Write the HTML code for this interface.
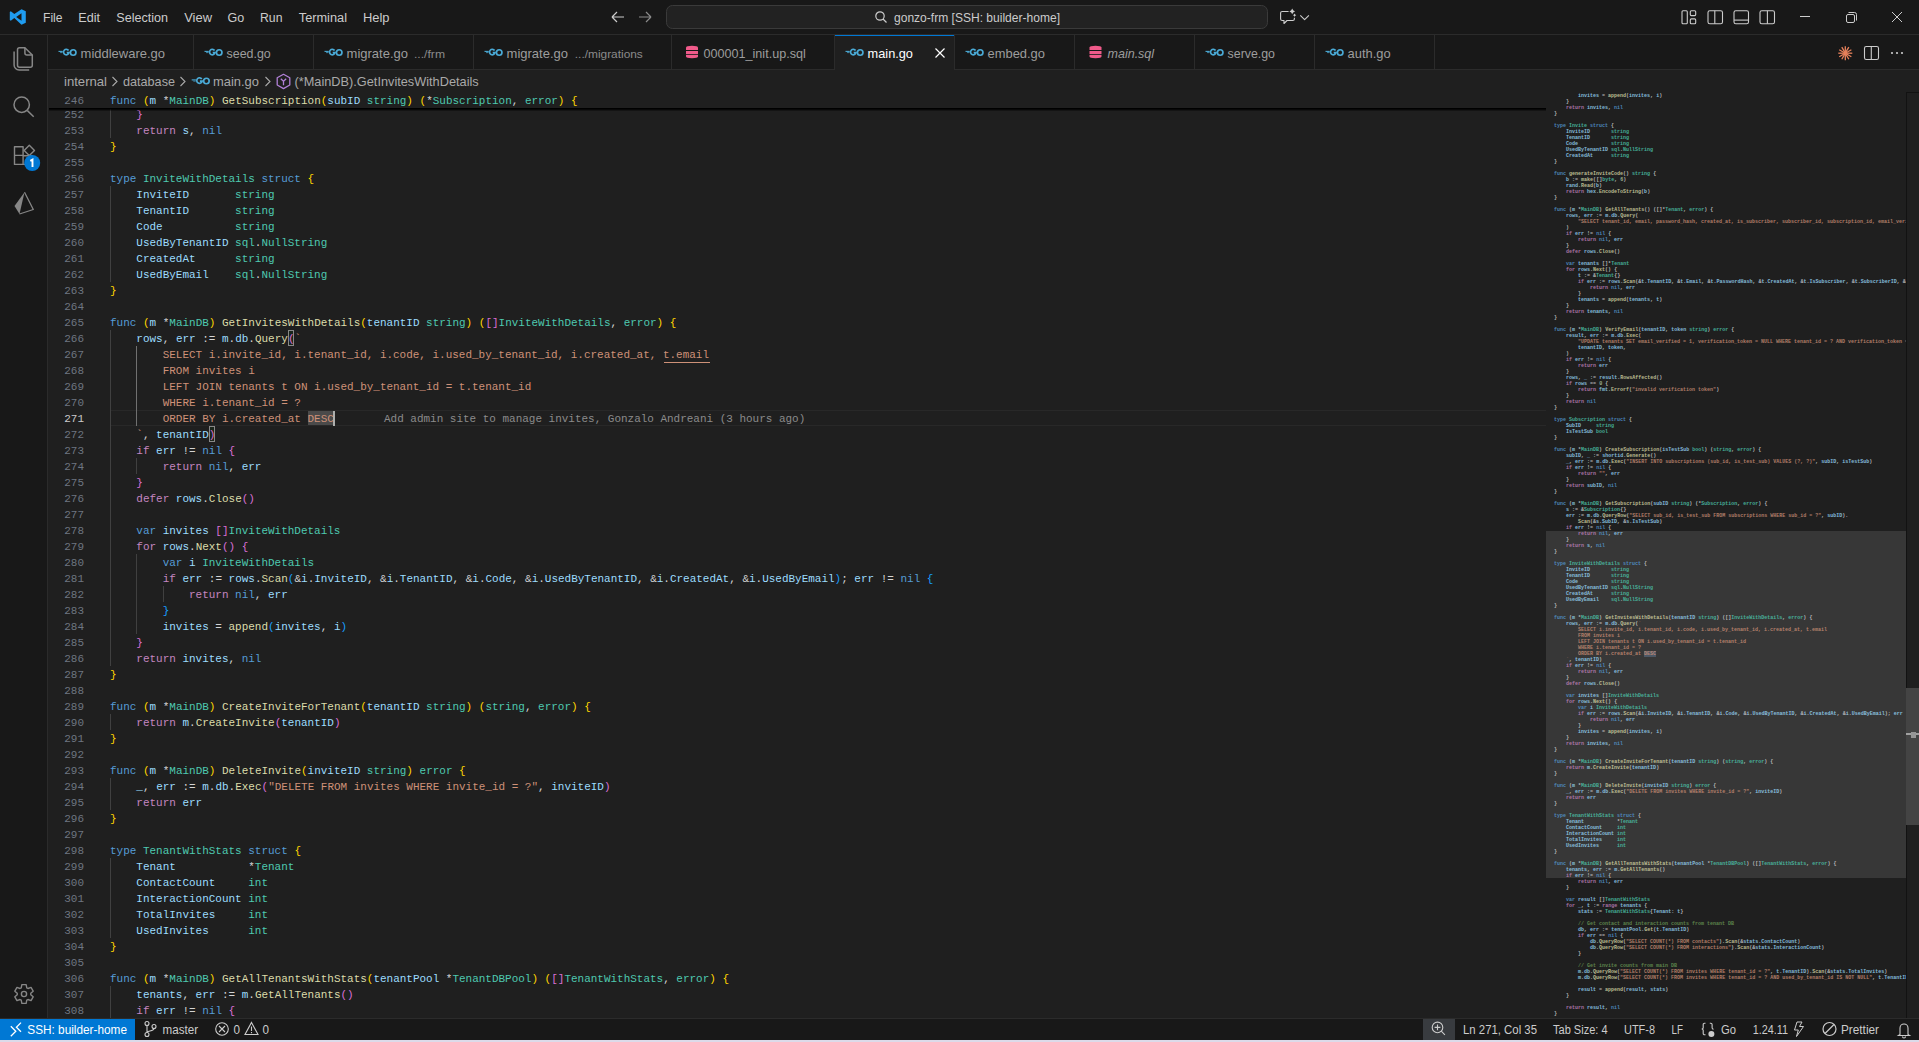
<!DOCTYPE html><html><head><meta charset="utf-8"><style>
*{margin:0;padding:0;box-sizing:border-box}
html,body{width:1919px;height:1042px;overflow:hidden;background:#1f1f1f}
body{position:relative;font-family:"Liberation Sans",sans-serif}
.abs{position:absolute}
.code{position:absolute;left:0;white-space:pre;font-family:"Liberation Mono",monospace;font-size:10.98px;line-height:16px;height:16px;color:#d4d4d4}
.ln{position:absolute;white-space:pre;font-family:"Liberation Mono",monospace;font-size:10.98px;line-height:16px;height:16px;color:#6e7681;text-align:right;width:40px;left:44px}
.mm{position:absolute;left:1554px;opacity:.82;white-space:pre;font-family:"Liberation Mono",monospace;font-size:5px;line-height:6px;height:6px;font-weight:bold}
svg text{font-family:"Liberation Sans",sans-serif}
</style></head><body><div class="abs" style="left:0;top:0;width:1919px;height:34px;background:#181818"></div><div class="abs" style="left:0;top:34px;width:1919px;height:1px;background:#2b2b2b"></div><div class="abs" style="left:0;top:35px;width:47px;height:983px;background:#181818"></div><div class="abs" style="left:47px;top:35px;width:1px;height:983px;background:#2b2b2b"></div><div class="abs" style="left:48px;top:35px;width:1871px;height:34px;background:#181818"></div><div class="abs" style="left:48px;top:69px;width:1871px;height:1px;background:#2b2b2b"></div><div class="abs" style="left:0;top:1018px;width:1919px;height:1px;background:#2b2b2b"></div><div class="abs" style="left:0;top:1019px;width:1919px;height:21px;background:#181818"></div><div class="abs" style="left:0;top:1019px;width:135px;height:21px;background:#0078d4"></div><div class="abs" style="left:1423px;top:1019px;width:32px;height:21px;background:#383b3f"></div><div class="abs" style="left:0;top:1040px;width:1919px;height:2px;background:#dcdae9"></div><div class="abs" style="left:835px;top:35px;width:119px;height:35px;background:#1f1f1f"></div><div class="abs" style="left:835px;top:35px;width:119px;height:1px;background:#0078d4"></div><div class="abs" style="left:193px;top:35px;width:1px;height:34px;background:#2b2b2b"></div><div class="abs" style="left:313px;top:35px;width:1px;height:34px;background:#2b2b2b"></div><div class="abs" style="left:473px;top:35px;width:1px;height:34px;background:#2b2b2b"></div><div class="abs" style="left:671px;top:35px;width:1px;height:34px;background:#2b2b2b"></div><div class="abs" style="left:834px;top:35px;width:1px;height:34px;background:#2b2b2b"></div><div class="abs" style="left:954px;top:35px;width:1px;height:34px;background:#2b2b2b"></div><div class="abs" style="left:1074px;top:35px;width:1px;height:34px;background:#2b2b2b"></div><div class="abs" style="left:1194px;top:35px;width:1px;height:34px;background:#2b2b2b"></div><div class="abs" style="left:1314px;top:35px;width:1px;height:34px;background:#2b2b2b"></div><div class="abs" style="left:1434px;top:35px;width:1px;height:34px;background:#2b2b2b"></div><div class="abs" style="left:110px;top:410px;width:1436px;height:16px;border-top:1px solid #282828;border-bottom:1px solid #282828"></div><div class="abs" style="left:110px;top:106px;width:1px;height:16px;background:#404040"></div><div class="abs" style="left:110px;top:122px;width:1px;height:16px;background:#404040"></div><div class="abs" style="left:110px;top:186px;width:1px;height:16px;background:#404040"></div><div class="abs" style="left:110px;top:202px;width:1px;height:16px;background:#404040"></div><div class="abs" style="left:110px;top:218px;width:1px;height:16px;background:#404040"></div><div class="abs" style="left:110px;top:234px;width:1px;height:16px;background:#404040"></div><div class="abs" style="left:110px;top:250px;width:1px;height:16px;background:#404040"></div><div class="abs" style="left:110px;top:266px;width:1px;height:16px;background:#404040"></div><div class="abs" style="left:110px;top:330px;width:1px;height:16px;background:#404040"></div><div class="abs" style="left:110px;top:346px;width:1px;height:16px;background:#404040"></div><div class="abs" style="left:136px;top:346px;width:1px;height:16px;background:#707070"></div><div class="abs" style="left:110px;top:362px;width:1px;height:16px;background:#404040"></div><div class="abs" style="left:136px;top:362px;width:1px;height:16px;background:#707070"></div><div class="abs" style="left:110px;top:378px;width:1px;height:16px;background:#404040"></div><div class="abs" style="left:136px;top:378px;width:1px;height:16px;background:#707070"></div><div class="abs" style="left:110px;top:394px;width:1px;height:16px;background:#404040"></div><div class="abs" style="left:136px;top:394px;width:1px;height:16px;background:#707070"></div><div class="abs" style="left:110px;top:410px;width:1px;height:16px;background:#404040"></div><div class="abs" style="left:136px;top:410px;width:1px;height:16px;background:#707070"></div><div class="abs" style="left:110px;top:426px;width:1px;height:16px;background:#404040"></div><div class="abs" style="left:110px;top:442px;width:1px;height:16px;background:#404040"></div><div class="abs" style="left:110px;top:458px;width:1px;height:16px;background:#404040"></div><div class="abs" style="left:136px;top:458px;width:1px;height:16px;background:#404040"></div><div class="abs" style="left:110px;top:474px;width:1px;height:16px;background:#404040"></div><div class="abs" style="left:110px;top:490px;width:1px;height:16px;background:#404040"></div><div class="abs" style="left:110px;top:506px;width:1px;height:16px;background:#404040"></div><div class="abs" style="left:110px;top:522px;width:1px;height:16px;background:#404040"></div><div class="abs" style="left:110px;top:538px;width:1px;height:16px;background:#404040"></div><div class="abs" style="left:110px;top:554px;width:1px;height:16px;background:#404040"></div><div class="abs" style="left:136px;top:554px;width:1px;height:16px;background:#404040"></div><div class="abs" style="left:110px;top:570px;width:1px;height:16px;background:#404040"></div><div class="abs" style="left:136px;top:570px;width:1px;height:16px;background:#404040"></div><div class="abs" style="left:110px;top:586px;width:1px;height:16px;background:#404040"></div><div class="abs" style="left:136px;top:586px;width:1px;height:16px;background:#404040"></div><div class="abs" style="left:163px;top:586px;width:1px;height:16px;background:#404040"></div><div class="abs" style="left:110px;top:602px;width:1px;height:16px;background:#404040"></div><div class="abs" style="left:136px;top:602px;width:1px;height:16px;background:#404040"></div><div class="abs" style="left:110px;top:618px;width:1px;height:16px;background:#404040"></div><div class="abs" style="left:136px;top:618px;width:1px;height:16px;background:#404040"></div><div class="abs" style="left:110px;top:634px;width:1px;height:16px;background:#404040"></div><div class="abs" style="left:110px;top:650px;width:1px;height:16px;background:#404040"></div><div class="abs" style="left:110px;top:714px;width:1px;height:16px;background:#404040"></div><div class="abs" style="left:110px;top:778px;width:1px;height:16px;background:#404040"></div><div class="abs" style="left:110px;top:794px;width:1px;height:16px;background:#404040"></div><div class="abs" style="left:110px;top:858px;width:1px;height:16px;background:#404040"></div><div class="abs" style="left:110px;top:874px;width:1px;height:16px;background:#404040"></div><div class="abs" style="left:110px;top:890px;width:1px;height:16px;background:#404040"></div><div class="abs" style="left:110px;top:906px;width:1px;height:16px;background:#404040"></div><div class="abs" style="left:110px;top:922px;width:1px;height:16px;background:#404040"></div><div class="abs" style="left:110px;top:986px;width:1px;height:16px;background:#404040"></div><div class="abs" style="left:110px;top:1002px;width:1px;height:16px;background:#404040"></div><div class="abs" style="left:308px;top:411px;width:25px;height:14px;background:#4a4a4a"></div><div class="abs" style="left:287.9px;top:330px;width:6.6px;height:16px;border:1px solid #888;background:#0064001a"></div><div class="abs" style="left:208.8px;top:426px;width:6.6px;height:16px;border:1px solid #888;background:#0064001a"></div><div class="code" style="left:110.0px;top:107px">    <span style="color:#da70d6">}</span></div><div class="ln" style="top:107px;color:#6e7681">252</div><div class="code" style="left:110.0px;top:123px">    <span style="color:#c586c0">return</span> <span style="color:#9cdcfe">s</span><span style="color:#d4d4d4">,</span> <span style="color:#569cd6">nil</span></div><div class="ln" style="top:123px;color:#6e7681">253</div><div class="code" style="left:110.0px;top:139px"><span style="color:#ffd700">}</span></div><div class="ln" style="top:139px;color:#6e7681">254</div><div class="code" style="left:110.0px;top:155px"></div><div class="ln" style="top:155px;color:#6e7681">255</div><div class="code" style="left:110.0px;top:171px"><span style="color:#569cd6">type</span> <span style="color:#4ec9b0">InviteWithDetails</span> <span style="color:#569cd6">struct</span> <span style="color:#ffd700">{</span></div><div class="ln" style="top:171px;color:#6e7681">256</div><div class="code" style="left:110.0px;top:187px">    <span style="color:#9cdcfe">InviteID</span>       <span style="color:#4ec9b0">string</span></div><div class="ln" style="top:187px;color:#6e7681">257</div><div class="code" style="left:110.0px;top:203px">    <span style="color:#9cdcfe">TenantID</span>       <span style="color:#4ec9b0">string</span></div><div class="ln" style="top:203px;color:#6e7681">258</div><div class="code" style="left:110.0px;top:219px">    <span style="color:#9cdcfe">Code</span>           <span style="color:#4ec9b0">string</span></div><div class="ln" style="top:219px;color:#6e7681">259</div><div class="code" style="left:110.0px;top:235px">    <span style="color:#9cdcfe">UsedByTenantID</span> <span style="color:#4ec9b0">sql</span><span style="color:#d4d4d4">.</span><span style="color:#4ec9b0">NullString</span></div><div class="ln" style="top:235px;color:#6e7681">260</div><div class="code" style="left:110.0px;top:251px">    <span style="color:#9cdcfe">CreatedAt</span>      <span style="color:#4ec9b0">string</span></div><div class="ln" style="top:251px;color:#6e7681">261</div><div class="code" style="left:110.0px;top:267px">    <span style="color:#9cdcfe">UsedByEmail</span>    <span style="color:#4ec9b0">sql</span><span style="color:#d4d4d4">.</span><span style="color:#4ec9b0">NullString</span></div><div class="ln" style="top:267px;color:#6e7681">262</div><div class="code" style="left:110.0px;top:283px"><span style="color:#ffd700">}</span></div><div class="ln" style="top:283px;color:#6e7681">263</div><div class="code" style="left:110.0px;top:299px"></div><div class="ln" style="top:299px;color:#6e7681">264</div><div class="code" style="left:110.0px;top:315px"><span style="color:#569cd6">func</span> <span style="color:#ffd700">(</span><span style="color:#9cdcfe">m</span> <span style="color:#d4d4d4">*</span><span style="color:#4ec9b0">MainDB</span><span style="color:#ffd700">)</span> <span style="color:#dcdcaa">GetInvitesWithDetails</span><span style="color:#ffd700">(</span><span style="color:#9cdcfe">tenantID</span> <span style="color:#4ec9b0">string</span><span style="color:#ffd700">)</span> <span style="color:#ffd700">(</span><span style="color:#da70d6">[</span><span style="color:#da70d6">]</span><span style="color:#4ec9b0">InviteWithDetails</span><span style="color:#d4d4d4">,</span> <span style="color:#4ec9b0">error</span><span style="color:#ffd700">)</span> <span style="color:#ffd700">{</span></div><div class="ln" style="top:315px;color:#6e7681">265</div><div class="code" style="left:110.0px;top:331px">    <span style="color:#9cdcfe">rows</span><span style="color:#d4d4d4">,</span> <span style="color:#9cdcfe">err</span> <span style="color:#d4d4d4">:</span><span style="color:#d4d4d4">=</span> <span style="color:#9cdcfe">m</span><span style="color:#d4d4d4">.</span><span style="color:#9cdcfe">db</span><span style="color:#d4d4d4">.</span><span style="color:#dcdcaa">Query</span><span style="color:#da70d6">(</span><span style="color:#ce9178">`</span></div><div class="ln" style="top:331px;color:#6e7681">266</div><div class="code" style="left:110.0px;top:347px"><span style="color:#ce9178">        SELECT i.invite_id, i.tenant_id, i.code, i.used_by_tenant_id, i.created_at, t.email</span></div><div class="ln" style="top:347px;color:#6e7681">267</div><div class="code" style="left:110.0px;top:363px"><span style="color:#ce9178">        FROM invites i</span></div><div class="ln" style="top:363px;color:#6e7681">268</div><div class="code" style="left:110.0px;top:379px"><span style="color:#ce9178">        LEFT JOIN tenants t ON i.used_by_tenant_id = t.tenant_id</span></div><div class="ln" style="top:379px;color:#6e7681">269</div><div class="code" style="left:110.0px;top:395px"><span style="color:#ce9178">        WHERE i.tenant_id = ?</span></div><div class="ln" style="top:395px;color:#6e7681">270</div><div class="code" style="left:110.0px;top:411px"><span style="color:#ce9178">        ORDER BY i.created_at DESC</span></div><div class="ln" style="top:411px;color:#cccccc">271</div><div class="code" style="left:110.0px;top:427px"><span style="color:#ce9178">    `</span><span style="color:#d4d4d4">,</span> <span style="color:#9cdcfe">tenantID</span><span style="color:#da70d6">)</span></div><div class="ln" style="top:427px;color:#6e7681">272</div><div class="code" style="left:110.0px;top:443px">    <span style="color:#c586c0">if</span> <span style="color:#9cdcfe">err</span> <span style="color:#d4d4d4">!</span><span style="color:#d4d4d4">=</span> <span style="color:#569cd6">nil</span> <span style="color:#da70d6">{</span></div><div class="ln" style="top:443px;color:#6e7681">273</div><div class="code" style="left:110.0px;top:459px">        <span style="color:#c586c0">return</span> <span style="color:#569cd6">nil</span><span style="color:#d4d4d4">,</span> <span style="color:#9cdcfe">err</span></div><div class="ln" style="top:459px;color:#6e7681">274</div><div class="code" style="left:110.0px;top:475px">    <span style="color:#da70d6">}</span></div><div class="ln" style="top:475px;color:#6e7681">275</div><div class="code" style="left:110.0px;top:491px">    <span style="color:#c586c0">defer</span> <span style="color:#9cdcfe">rows</span><span style="color:#d4d4d4">.</span><span style="color:#dcdcaa">Close</span><span style="color:#da70d6">(</span><span style="color:#da70d6">)</span></div><div class="ln" style="top:491px;color:#6e7681">276</div><div class="code" style="left:110.0px;top:507px"></div><div class="ln" style="top:507px;color:#6e7681">277</div><div class="code" style="left:110.0px;top:523px">    <span style="color:#569cd6">var</span> <span style="color:#9cdcfe">invites</span> <span style="color:#da70d6">[</span><span style="color:#da70d6">]</span><span style="color:#4ec9b0">InviteWithDetails</span></div><div class="ln" style="top:523px;color:#6e7681">278</div><div class="code" style="left:110.0px;top:539px">    <span style="color:#c586c0">for</span> <span style="color:#9cdcfe">rows</span><span style="color:#d4d4d4">.</span><span style="color:#dcdcaa">Next</span><span style="color:#da70d6">(</span><span style="color:#da70d6">)</span> <span style="color:#da70d6">{</span></div><div class="ln" style="top:539px;color:#6e7681">279</div><div class="code" style="left:110.0px;top:555px">        <span style="color:#569cd6">var</span> <span style="color:#9cdcfe">i</span> <span style="color:#4ec9b0">InviteWithDetails</span></div><div class="ln" style="top:555px;color:#6e7681">280</div><div class="code" style="left:110.0px;top:571px">        <span style="color:#c586c0">if</span> <span style="color:#9cdcfe">err</span> <span style="color:#d4d4d4">:</span><span style="color:#d4d4d4">=</span> <span style="color:#9cdcfe">rows</span><span style="color:#d4d4d4">.</span><span style="color:#dcdcaa">Scan</span><span style="color:#179fff">(</span><span style="color:#d4d4d4">&amp;</span><span style="color:#9cdcfe">i</span><span style="color:#d4d4d4">.</span><span style="color:#9cdcfe">InviteID</span><span style="color:#d4d4d4">,</span> <span style="color:#d4d4d4">&amp;</span><span style="color:#9cdcfe">i</span><span style="color:#d4d4d4">.</span><span style="color:#9cdcfe">TenantID</span><span style="color:#d4d4d4">,</span> <span style="color:#d4d4d4">&amp;</span><span style="color:#9cdcfe">i</span><span style="color:#d4d4d4">.</span><span style="color:#9cdcfe">Code</span><span style="color:#d4d4d4">,</span> <span style="color:#d4d4d4">&amp;</span><span style="color:#9cdcfe">i</span><span style="color:#d4d4d4">.</span><span style="color:#9cdcfe">UsedByTenantID</span><span style="color:#d4d4d4">,</span> <span style="color:#d4d4d4">&amp;</span><span style="color:#9cdcfe">i</span><span style="color:#d4d4d4">.</span><span style="color:#9cdcfe">CreatedAt</span><span style="color:#d4d4d4">,</span> <span style="color:#d4d4d4">&amp;</span><span style="color:#9cdcfe">i</span><span style="color:#d4d4d4">.</span><span style="color:#9cdcfe">UsedByEmail</span><span style="color:#179fff">)</span><span style="color:#d4d4d4">;</span> <span style="color:#9cdcfe">err</span> <span style="color:#d4d4d4">!</span><span style="color:#d4d4d4">=</span> <span style="color:#569cd6">nil</span> <span style="color:#179fff">{</span></div><div class="ln" style="top:571px;color:#6e7681">281</div><div class="code" style="left:110.0px;top:587px">            <span style="color:#c586c0">return</span> <span style="color:#569cd6">nil</span><span style="color:#d4d4d4">,</span> <span style="color:#9cdcfe">err</span></div><div class="ln" style="top:587px;color:#6e7681">282</div><div class="code" style="left:110.0px;top:603px">        <span style="color:#179fff">}</span></div><div class="ln" style="top:603px;color:#6e7681">283</div><div class="code" style="left:110.0px;top:619px">        <span style="color:#9cdcfe">invites</span> <span style="color:#d4d4d4">=</span> <span style="color:#dcdcaa">append</span><span style="color:#179fff">(</span><span style="color:#9cdcfe">invites</span><span style="color:#d4d4d4">,</span> <span style="color:#9cdcfe">i</span><span style="color:#179fff">)</span></div><div class="ln" style="top:619px;color:#6e7681">284</div><div class="code" style="left:110.0px;top:635px">    <span style="color:#da70d6">}</span></div><div class="ln" style="top:635px;color:#6e7681">285</div><div class="code" style="left:110.0px;top:651px">    <span style="color:#c586c0">return</span> <span style="color:#9cdcfe">invites</span><span style="color:#d4d4d4">,</span> <span style="color:#569cd6">nil</span></div><div class="ln" style="top:651px;color:#6e7681">286</div><div class="code" style="left:110.0px;top:667px"><span style="color:#ffd700">}</span></div><div class="ln" style="top:667px;color:#6e7681">287</div><div class="code" style="left:110.0px;top:683px"></div><div class="ln" style="top:683px;color:#6e7681">288</div><div class="code" style="left:110.0px;top:699px"><span style="color:#569cd6">func</span> <span style="color:#ffd700">(</span><span style="color:#9cdcfe">m</span> <span style="color:#d4d4d4">*</span><span style="color:#4ec9b0">MainDB</span><span style="color:#ffd700">)</span> <span style="color:#dcdcaa">CreateInviteForTenant</span><span style="color:#ffd700">(</span><span style="color:#9cdcfe">tenantID</span> <span style="color:#4ec9b0">string</span><span style="color:#ffd700">)</span> <span style="color:#ffd700">(</span><span style="color:#4ec9b0">string</span><span style="color:#d4d4d4">,</span> <span style="color:#4ec9b0">error</span><span style="color:#ffd700">)</span> <span style="color:#ffd700">{</span></div><div class="ln" style="top:699px;color:#6e7681">289</div><div class="code" style="left:110.0px;top:715px">    <span style="color:#c586c0">return</span> <span style="color:#9cdcfe">m</span><span style="color:#d4d4d4">.</span><span style="color:#dcdcaa">CreateInvite</span><span style="color:#da70d6">(</span><span style="color:#9cdcfe">tenantID</span><span style="color:#da70d6">)</span></div><div class="ln" style="top:715px;color:#6e7681">290</div><div class="code" style="left:110.0px;top:731px"><span style="color:#ffd700">}</span></div><div class="ln" style="top:731px;color:#6e7681">291</div><div class="code" style="left:110.0px;top:747px"></div><div class="ln" style="top:747px;color:#6e7681">292</div><div class="code" style="left:110.0px;top:763px"><span style="color:#569cd6">func</span> <span style="color:#ffd700">(</span><span style="color:#9cdcfe">m</span> <span style="color:#d4d4d4">*</span><span style="color:#4ec9b0">MainDB</span><span style="color:#ffd700">)</span> <span style="color:#dcdcaa">DeleteInvite</span><span style="color:#ffd700">(</span><span style="color:#9cdcfe">inviteID</span> <span style="color:#4ec9b0">string</span><span style="color:#ffd700">)</span> <span style="color:#4ec9b0">error</span> <span style="color:#ffd700">{</span></div><div class="ln" style="top:763px;color:#6e7681">293</div><div class="code" style="left:110.0px;top:779px">    <span style="color:#9cdcfe">_</span><span style="color:#d4d4d4">,</span> <span style="color:#9cdcfe">err</span> <span style="color:#d4d4d4">:</span><span style="color:#d4d4d4">=</span> <span style="color:#9cdcfe">m</span><span style="color:#d4d4d4">.</span><span style="color:#9cdcfe">db</span><span style="color:#d4d4d4">.</span><span style="color:#dcdcaa">Exec</span><span style="color:#da70d6">(</span><span style="color:#ce9178">&quot;DELETE FROM invites WHERE invite_id = ?&quot;</span><span style="color:#d4d4d4">,</span> <span style="color:#9cdcfe">inviteID</span><span style="color:#da70d6">)</span></div><div class="ln" style="top:779px;color:#6e7681">294</div><div class="code" style="left:110.0px;top:795px">    <span style="color:#c586c0">return</span> <span style="color:#9cdcfe">err</span></div><div class="ln" style="top:795px;color:#6e7681">295</div><div class="code" style="left:110.0px;top:811px"><span style="color:#ffd700">}</span></div><div class="ln" style="top:811px;color:#6e7681">296</div><div class="code" style="left:110.0px;top:827px"></div><div class="ln" style="top:827px;color:#6e7681">297</div><div class="code" style="left:110.0px;top:843px"><span style="color:#569cd6">type</span> <span style="color:#4ec9b0">TenantWithStats</span> <span style="color:#569cd6">struct</span> <span style="color:#ffd700">{</span></div><div class="ln" style="top:843px;color:#6e7681">298</div><div class="code" style="left:110.0px;top:859px">    <span style="color:#9cdcfe">Tenant</span>           <span style="color:#d4d4d4">*</span><span style="color:#4ec9b0">Tenant</span></div><div class="ln" style="top:859px;color:#6e7681">299</div><div class="code" style="left:110.0px;top:875px">    <span style="color:#9cdcfe">ContactCount</span>     <span style="color:#4ec9b0">int</span></div><div class="ln" style="top:875px;color:#6e7681">300</div><div class="code" style="left:110.0px;top:891px">    <span style="color:#9cdcfe">InteractionCount</span> <span style="color:#4ec9b0">int</span></div><div class="ln" style="top:891px;color:#6e7681">301</div><div class="code" style="left:110.0px;top:907px">    <span style="color:#9cdcfe">TotalInvites</span>     <span style="color:#4ec9b0">int</span></div><div class="ln" style="top:907px;color:#6e7681">302</div><div class="code" style="left:110.0px;top:923px">    <span style="color:#9cdcfe">UsedInvites</span>      <span style="color:#4ec9b0">int</span></div><div class="ln" style="top:923px;color:#6e7681">303</div><div class="code" style="left:110.0px;top:939px"><span style="color:#ffd700">}</span></div><div class="ln" style="top:939px;color:#6e7681">304</div><div class="code" style="left:110.0px;top:955px"></div><div class="ln" style="top:955px;color:#6e7681">305</div><div class="code" style="left:110.0px;top:971px"><span style="color:#569cd6">func</span> <span style="color:#ffd700">(</span><span style="color:#9cdcfe">m</span> <span style="color:#d4d4d4">*</span><span style="color:#4ec9b0">MainDB</span><span style="color:#ffd700">)</span> <span style="color:#dcdcaa">GetAllTenantsWithStats</span><span style="color:#ffd700">(</span><span style="color:#9cdcfe">tenantPool</span> <span style="color:#d4d4d4">*</span><span style="color:#4ec9b0">TenantDBPool</span><span style="color:#ffd700">)</span> <span style="color:#ffd700">(</span><span style="color:#da70d6">[</span><span style="color:#da70d6">]</span><span style="color:#4ec9b0">TenantWithStats</span><span style="color:#d4d4d4">,</span> <span style="color:#4ec9b0">error</span><span style="color:#ffd700">)</span> <span style="color:#ffd700">{</span></div><div class="ln" style="top:971px;color:#6e7681">306</div><div class="code" style="left:110.0px;top:987px">    <span style="color:#9cdcfe">tenants</span><span style="color:#d4d4d4">,</span> <span style="color:#9cdcfe">err</span> <span style="color:#d4d4d4">:</span><span style="color:#d4d4d4">=</span> <span style="color:#9cdcfe">m</span><span style="color:#d4d4d4">.</span><span style="color:#dcdcaa">GetAllTenants</span><span style="color:#da70d6">(</span><span style="color:#da70d6">)</span></div><div class="ln" style="top:987px;color:#6e7681">307</div><div class="code" style="left:110.0px;top:1003px">    <span style="color:#c586c0">if</span> <span style="color:#9cdcfe">err</span> <span style="color:#d4d4d4">!</span><span style="color:#d4d4d4">=</span> <span style="color:#569cd6">nil</span> <span style="color:#da70d6">{</span></div><div class="ln" style="top:1003px;color:#6e7681">308</div><div class="abs" style="left:663.6px;top:362px;width:46.1px;height:1px;background:#ce9178"></div><div class="abs" style="left:333px;top:411px;width:2px;height:15px;background:#aeafad"></div><div class="code" style="left:384px;top:411px;color:#8b8b8b">Add admin site to manage invites, Gonzalo Andreani (3 hours ago)</div><div class="abs" style="left:48px;top:92px;width:1498px;height:16px;background:#1f1f1f"></div><div class="abs" style="left:49px;top:108px;width:1497px;height:1px;background:#000"></div><div class="abs" style="left:49px;top:109px;width:1497px;height:1px;background:rgba(0,0,0,.72)"></div><div class="abs" style="left:49px;top:110px;width:1497px;height:1px;background:rgba(0,0,0,.35)"></div><div class="code" style="left:110.0px;top:93px"><span style="color:#569cd6">func</span> <span style="color:#ffd700">(</span><span style="color:#9cdcfe">m</span> <span style="color:#d4d4d4">*</span><span style="color:#4ec9b0">MainDB</span><span style="color:#ffd700">)</span> <span style="color:#dcdcaa">GetSubscription</span><span style="color:#ffd700">(</span><span style="color:#9cdcfe">subID</span> <span style="color:#4ec9b0">string</span><span style="color:#ffd700">)</span> <span style="color:#ffd700">(</span><span style="color:#d4d4d4">*</span><span style="color:#4ec9b0">Subscription</span><span style="color:#d4d4d4">,</span> <span style="color:#4ec9b0">error</span><span style="color:#ffd700">)</span> <span style="color:#ffd700">{</span></div><div class="ln" style="top:93px">246</div><div class="abs" style="left:1546px;top:531px;width:360px;height:347px;background:#373737"></div><div class="abs" style="left:1644px;top:651px;width:12px;height:6px;background:#4d5866"></div><div class="abs" style="left:0;top:0;width:1906px;height:1018px;overflow:hidden"><div class="mm" style="top:93px">        <span style="color:#9cdcfe">invites</span> <span style="color:#d4d4d4">=</span> <span style="color:#dcdcaa">append</span><span style="color:#d4d4d4">(</span><span style="color:#9cdcfe">invites</span><span style="color:#d4d4d4">,</span> <span style="color:#9cdcfe">i</span><span style="color:#d4d4d4">)</span></div><div class="mm" style="top:99px">    <span style="color:#d4d4d4">}</span></div><div class="mm" style="top:105px">    <span style="color:#c586c0">return</span> <span style="color:#9cdcfe">invites</span><span style="color:#d4d4d4">,</span> <span style="color:#569cd6">nil</span></div><div class="mm" style="top:111px"><span style="color:#d4d4d4">}</span></div><div class="mm" style="top:117px"></div><div class="mm" style="top:123px"><span style="color:#569cd6">type</span> <span style="color:#4ec9b0">Invite</span> <span style="color:#569cd6">struct</span> <span style="color:#d4d4d4">{</span></div><div class="mm" style="top:129px">    <span style="color:#9cdcfe">InviteID</span>       <span style="color:#4ec9b0">string</span></div><div class="mm" style="top:135px">    <span style="color:#9cdcfe">TenantID</span>       <span style="color:#4ec9b0">string</span></div><div class="mm" style="top:141px">    <span style="color:#9cdcfe">Code</span>           <span style="color:#4ec9b0">string</span></div><div class="mm" style="top:147px">    <span style="color:#9cdcfe">UsedByTenantID</span> <span style="color:#4ec9b0">sql</span><span style="color:#d4d4d4">.</span><span style="color:#4ec9b0">NullString</span></div><div class="mm" style="top:153px">    <span style="color:#9cdcfe">CreatedAt</span>      <span style="color:#4ec9b0">string</span></div><div class="mm" style="top:159px"><span style="color:#d4d4d4">}</span></div><div class="mm" style="top:165px"></div><div class="mm" style="top:171px"><span style="color:#569cd6">func</span> <span style="color:#dcdcaa">generateInviteCode</span><span style="color:#d4d4d4">(</span><span style="color:#d4d4d4">)</span> <span style="color:#4ec9b0">string</span> <span style="color:#d4d4d4">{</span></div><div class="mm" style="top:177px">    <span style="color:#9cdcfe">b</span> <span style="color:#d4d4d4">:</span><span style="color:#d4d4d4">=</span> <span style="color:#dcdcaa">make</span><span style="color:#d4d4d4">(</span><span style="color:#d4d4d4">[</span><span style="color:#d4d4d4">]</span><span style="color:#4ec9b0">byte</span><span style="color:#d4d4d4">,</span> <span style="color:#b5cea8">6</span><span style="color:#d4d4d4">)</span></div><div class="mm" style="top:183px">    <span style="color:#9cdcfe">rand</span><span style="color:#d4d4d4">.</span><span style="color:#dcdcaa">Read</span><span style="color:#d4d4d4">(</span><span style="color:#9cdcfe">b</span><span style="color:#d4d4d4">)</span></div><div class="mm" style="top:189px">    <span style="color:#c586c0">return</span> <span style="color:#9cdcfe">hex</span><span style="color:#d4d4d4">.</span><span style="color:#dcdcaa">EncodeToString</span><span style="color:#d4d4d4">(</span><span style="color:#9cdcfe">b</span><span style="color:#d4d4d4">)</span></div><div class="mm" style="top:195px"><span style="color:#d4d4d4">}</span></div><div class="mm" style="top:201px"></div><div class="mm" style="top:207px"><span style="color:#569cd6">func</span> <span style="color:#d4d4d4">(</span><span style="color:#9cdcfe">m</span> <span style="color:#d4d4d4">*</span><span style="color:#4ec9b0">MainDB</span><span style="color:#d4d4d4">)</span> <span style="color:#dcdcaa">GetAllTenants</span><span style="color:#d4d4d4">(</span><span style="color:#d4d4d4">)</span> <span style="color:#d4d4d4">(</span><span style="color:#d4d4d4">[</span><span style="color:#d4d4d4">]</span><span style="color:#d4d4d4">*</span><span style="color:#4ec9b0">Tenant</span><span style="color:#d4d4d4">,</span> <span style="color:#4ec9b0">error</span><span style="color:#d4d4d4">)</span> <span style="color:#d4d4d4">{</span></div><div class="mm" style="top:213px">    <span style="color:#9cdcfe">rows</span><span style="color:#d4d4d4">,</span> <span style="color:#9cdcfe">err</span> <span style="color:#d4d4d4">:</span><span style="color:#d4d4d4">=</span> <span style="color:#9cdcfe">m</span><span style="color:#d4d4d4">.</span><span style="color:#9cdcfe">db</span><span style="color:#d4d4d4">.</span><span style="color:#dcdcaa">Query</span><span style="color:#d4d4d4">(</span></div><div class="mm" style="top:219px">        <span style="color:#ce9178">&quot;SELECT tenant_id, email, password_hash, created_at, is_subscriber, subscriber_id, subscription_id, email_verified FROM tenants&quot;</span><span style="color:#d4d4d4">,</span></div><div class="mm" style="top:225px">    <span style="color:#d4d4d4">)</span></div><div class="mm" style="top:231px">    <span style="color:#c586c0">if</span> <span style="color:#9cdcfe">err</span> <span style="color:#d4d4d4">!</span><span style="color:#d4d4d4">=</span> <span style="color:#569cd6">nil</span> <span style="color:#d4d4d4">{</span></div><div class="mm" style="top:237px">        <span style="color:#c586c0">return</span> <span style="color:#569cd6">nil</span><span style="color:#d4d4d4">,</span> <span style="color:#9cdcfe">err</span></div><div class="mm" style="top:243px">    <span style="color:#d4d4d4">}</span></div><div class="mm" style="top:249px">    <span style="color:#c586c0">defer</span> <span style="color:#9cdcfe">rows</span><span style="color:#d4d4d4">.</span><span style="color:#dcdcaa">Close</span><span style="color:#d4d4d4">(</span><span style="color:#d4d4d4">)</span></div><div class="mm" style="top:255px"></div><div class="mm" style="top:261px">    <span style="color:#569cd6">var</span> <span style="color:#9cdcfe">tenants</span> <span style="color:#d4d4d4">[</span><span style="color:#d4d4d4">]</span><span style="color:#d4d4d4">*</span><span style="color:#4ec9b0">Tenant</span></div><div class="mm" style="top:267px">    <span style="color:#c586c0">for</span> <span style="color:#9cdcfe">rows</span><span style="color:#d4d4d4">.</span><span style="color:#dcdcaa">Next</span><span style="color:#d4d4d4">(</span><span style="color:#d4d4d4">)</span> <span style="color:#d4d4d4">{</span></div><div class="mm" style="top:273px">        <span style="color:#9cdcfe">t</span> <span style="color:#d4d4d4">:</span><span style="color:#d4d4d4">=</span> <span style="color:#d4d4d4">&amp;</span><span style="color:#4ec9b0">Tenant</span><span style="color:#d4d4d4">{</span><span style="color:#d4d4d4">}</span></div><div class="mm" style="top:279px">        <span style="color:#c586c0">if</span> <span style="color:#9cdcfe">err</span> <span style="color:#d4d4d4">:</span><span style="color:#d4d4d4">=</span> <span style="color:#9cdcfe">rows</span><span style="color:#d4d4d4">.</span><span style="color:#dcdcaa">Scan</span><span style="color:#d4d4d4">(</span><span style="color:#d4d4d4">&amp;</span><span style="color:#9cdcfe">t</span><span style="color:#d4d4d4">.</span><span style="color:#9cdcfe">TenantID</span><span style="color:#d4d4d4">,</span> <span style="color:#d4d4d4">&amp;</span><span style="color:#9cdcfe">t</span><span style="color:#d4d4d4">.</span><span style="color:#9cdcfe">Email</span><span style="color:#d4d4d4">,</span> <span style="color:#d4d4d4">&amp;</span><span style="color:#9cdcfe">t</span><span style="color:#d4d4d4">.</span><span style="color:#9cdcfe">PasswordHash</span><span style="color:#d4d4d4">,</span> <span style="color:#d4d4d4">&amp;</span><span style="color:#9cdcfe">t</span><span style="color:#d4d4d4">.</span><span style="color:#9cdcfe">CreatedAt</span><span style="color:#d4d4d4">,</span> <span style="color:#d4d4d4">&amp;</span><span style="color:#9cdcfe">t</span><span style="color:#d4d4d4">.</span><span style="color:#9cdcfe">IsSubscriber</span><span style="color:#d4d4d4">,</span> <span style="color:#d4d4d4">&amp;</span><span style="color:#9cdcfe">t</span><span style="color:#d4d4d4">.</span><span style="color:#9cdcfe">SubscriberID</span><span style="color:#d4d4d4">,</span> <span style="color:#d4d4d4">&amp;</span><span style="color:#9cdcfe">t</span><span style="color:#d4d4d4">.</span><span style="color:#9cdcfe">SubscriptionID</span><span style="color:#d4d4d4">)</span><span style="color:#d4d4d4">;</span> <span style="color:#9cdcfe">err</span> <span style="color:#d4d4d4">!</span><span style="color:#d4d4d4">=</span> <span style="color:#569cd6">nil</span> <span style="color:#d4d4d4">{</span></div><div class="mm" style="top:285px">            <span style="color:#c586c0">return</span> <span style="color:#569cd6">nil</span><span style="color:#d4d4d4">,</span> <span style="color:#9cdcfe">err</span></div><div class="mm" style="top:291px">        <span style="color:#d4d4d4">}</span></div><div class="mm" style="top:297px">        <span style="color:#9cdcfe">tenants</span> <span style="color:#d4d4d4">=</span> <span style="color:#dcdcaa">append</span><span style="color:#d4d4d4">(</span><span style="color:#9cdcfe">tenants</span><span style="color:#d4d4d4">,</span> <span style="color:#9cdcfe">t</span><span style="color:#d4d4d4">)</span></div><div class="mm" style="top:303px">    <span style="color:#d4d4d4">}</span></div><div class="mm" style="top:309px">    <span style="color:#c586c0">return</span> <span style="color:#9cdcfe">tenants</span><span style="color:#d4d4d4">,</span> <span style="color:#569cd6">nil</span></div><div class="mm" style="top:315px"><span style="color:#d4d4d4">}</span></div><div class="mm" style="top:321px"></div><div class="mm" style="top:327px"><span style="color:#569cd6">func</span> <span style="color:#d4d4d4">(</span><span style="color:#9cdcfe">m</span> <span style="color:#d4d4d4">*</span><span style="color:#4ec9b0">MainDB</span><span style="color:#d4d4d4">)</span> <span style="color:#dcdcaa">VerifyEmail</span><span style="color:#d4d4d4">(</span><span style="color:#9cdcfe">tenantID</span><span style="color:#d4d4d4">,</span> <span style="color:#9cdcfe">token</span> <span style="color:#4ec9b0">string</span><span style="color:#d4d4d4">)</span> <span style="color:#4ec9b0">error</span> <span style="color:#d4d4d4">{</span></div><div class="mm" style="top:333px">    <span style="color:#9cdcfe">result</span><span style="color:#d4d4d4">,</span> <span style="color:#9cdcfe">err</span> <span style="color:#d4d4d4">:</span><span style="color:#d4d4d4">=</span> <span style="color:#9cdcfe">m</span><span style="color:#d4d4d4">.</span><span style="color:#9cdcfe">db</span><span style="color:#d4d4d4">.</span><span style="color:#dcdcaa">Exec</span><span style="color:#d4d4d4">(</span></div><div class="mm" style="top:339px">        <span style="color:#ce9178">&quot;UPDATE tenants SET email_verified = 1, verification_token = NULL WHERE tenant_id = ? AND verification_token = ?&quot;</span><span style="color:#d4d4d4">,</span></div><div class="mm" style="top:345px">        <span style="color:#9cdcfe">tenantID</span><span style="color:#d4d4d4">,</span> <span style="color:#9cdcfe">token</span><span style="color:#d4d4d4">,</span></div><div class="mm" style="top:351px">    <span style="color:#d4d4d4">)</span></div><div class="mm" style="top:357px">    <span style="color:#c586c0">if</span> <span style="color:#9cdcfe">err</span> <span style="color:#d4d4d4">!</span><span style="color:#d4d4d4">=</span> <span style="color:#569cd6">nil</span> <span style="color:#d4d4d4">{</span></div><div class="mm" style="top:363px">        <span style="color:#c586c0">return</span> <span style="color:#9cdcfe">err</span></div><div class="mm" style="top:369px">    <span style="color:#d4d4d4">}</span></div><div class="mm" style="top:375px">    <span style="color:#9cdcfe">rows</span><span style="color:#d4d4d4">,</span> <span style="color:#9cdcfe">_</span> <span style="color:#d4d4d4">:</span><span style="color:#d4d4d4">=</span> <span style="color:#9cdcfe">result</span><span style="color:#d4d4d4">.</span><span style="color:#dcdcaa">RowsAffected</span><span style="color:#d4d4d4">(</span><span style="color:#d4d4d4">)</span></div><div class="mm" style="top:381px">    <span style="color:#c586c0">if</span> <span style="color:#9cdcfe">rows</span> <span style="color:#d4d4d4">=</span><span style="color:#d4d4d4">=</span> <span style="color:#b5cea8">0</span> <span style="color:#d4d4d4">{</span></div><div class="mm" style="top:387px">        <span style="color:#c586c0">return</span> <span style="color:#9cdcfe">fmt</span><span style="color:#d4d4d4">.</span><span style="color:#dcdcaa">Errorf</span><span style="color:#d4d4d4">(</span><span style="color:#ce9178">&quot;invalid verification token&quot;</span><span style="color:#d4d4d4">)</span></div><div class="mm" style="top:393px">    <span style="color:#d4d4d4">}</span></div><div class="mm" style="top:399px">    <span style="color:#c586c0">return</span> <span style="color:#569cd6">nil</span></div><div class="mm" style="top:405px"><span style="color:#d4d4d4">}</span></div><div class="mm" style="top:411px"></div><div class="mm" style="top:417px"><span style="color:#569cd6">type</span> <span style="color:#4ec9b0">Subscription</span> <span style="color:#569cd6">struct</span> <span style="color:#d4d4d4">{</span></div><div class="mm" style="top:423px">    <span style="color:#9cdcfe">SubID</span>     <span style="color:#4ec9b0">string</span></div><div class="mm" style="top:429px">    <span style="color:#9cdcfe">IsTestSub</span> <span style="color:#4ec9b0">bool</span></div><div class="mm" style="top:435px"><span style="color:#d4d4d4">}</span></div><div class="mm" style="top:441px"></div><div class="mm" style="top:447px"><span style="color:#569cd6">func</span> <span style="color:#d4d4d4">(</span><span style="color:#9cdcfe">m</span> <span style="color:#d4d4d4">*</span><span style="color:#4ec9b0">MainDB</span><span style="color:#d4d4d4">)</span> <span style="color:#dcdcaa">CreateSubscription</span><span style="color:#d4d4d4">(</span><span style="color:#9cdcfe">isTestSub</span> <span style="color:#4ec9b0">bool</span><span style="color:#d4d4d4">)</span> <span style="color:#d4d4d4">(</span><span style="color:#4ec9b0">string</span><span style="color:#d4d4d4">,</span> <span style="color:#4ec9b0">error</span><span style="color:#d4d4d4">)</span> <span style="color:#d4d4d4">{</span></div><div class="mm" style="top:453px">    <span style="color:#9cdcfe">subID</span><span style="color:#d4d4d4">,</span> <span style="color:#9cdcfe">_</span> <span style="color:#d4d4d4">:</span><span style="color:#d4d4d4">=</span> <span style="color:#9cdcfe">shortid</span><span style="color:#d4d4d4">.</span><span style="color:#dcdcaa">Generate</span><span style="color:#d4d4d4">(</span><span style="color:#d4d4d4">)</span></div><div class="mm" style="top:459px">    <span style="color:#9cdcfe">_</span><span style="color:#d4d4d4">,</span> <span style="color:#9cdcfe">err</span> <span style="color:#d4d4d4">:</span><span style="color:#d4d4d4">=</span> <span style="color:#9cdcfe">m</span><span style="color:#d4d4d4">.</span><span style="color:#9cdcfe">db</span><span style="color:#d4d4d4">.</span><span style="color:#dcdcaa">Exec</span><span style="color:#d4d4d4">(</span><span style="color:#ce9178">&quot;INSERT INTO subscriptions (sub_id, is_test_sub) VALUES (?, ?)&quot;</span><span style="color:#d4d4d4">,</span> <span style="color:#9cdcfe">subID</span><span style="color:#d4d4d4">,</span> <span style="color:#9cdcfe">isTestSub</span><span style="color:#d4d4d4">)</span></div><div class="mm" style="top:465px">    <span style="color:#c586c0">if</span> <span style="color:#9cdcfe">err</span> <span style="color:#d4d4d4">!</span><span style="color:#d4d4d4">=</span> <span style="color:#569cd6">nil</span> <span style="color:#d4d4d4">{</span></div><div class="mm" style="top:471px">        <span style="color:#c586c0">return</span> <span style="color:#ce9178">&quot;&quot;</span><span style="color:#d4d4d4">,</span> <span style="color:#9cdcfe">err</span></div><div class="mm" style="top:477px">    <span style="color:#d4d4d4">}</span></div><div class="mm" style="top:483px">    <span style="color:#c586c0">return</span> <span style="color:#9cdcfe">subID</span><span style="color:#d4d4d4">,</span> <span style="color:#569cd6">nil</span></div><div class="mm" style="top:489px"><span style="color:#d4d4d4">}</span></div><div class="mm" style="top:495px"></div><div class="mm" style="top:501px"><span style="color:#569cd6">func</span> <span style="color:#d4d4d4">(</span><span style="color:#9cdcfe">m</span> <span style="color:#d4d4d4">*</span><span style="color:#4ec9b0">MainDB</span><span style="color:#d4d4d4">)</span> <span style="color:#dcdcaa">GetSubscription</span><span style="color:#d4d4d4">(</span><span style="color:#9cdcfe">subID</span> <span style="color:#4ec9b0">string</span><span style="color:#d4d4d4">)</span> <span style="color:#d4d4d4">(</span><span style="color:#d4d4d4">*</span><span style="color:#4ec9b0">Subscription</span><span style="color:#d4d4d4">,</span> <span style="color:#4ec9b0">error</span><span style="color:#d4d4d4">)</span> <span style="color:#d4d4d4">{</span></div><div class="mm" style="top:507px">    <span style="color:#9cdcfe">s</span> <span style="color:#d4d4d4">:</span><span style="color:#d4d4d4">=</span> <span style="color:#d4d4d4">&amp;</span><span style="color:#4ec9b0">Subscription</span><span style="color:#d4d4d4">{</span><span style="color:#d4d4d4">}</span></div><div class="mm" style="top:513px">    <span style="color:#9cdcfe">err</span> <span style="color:#d4d4d4">:</span><span style="color:#d4d4d4">=</span> <span style="color:#9cdcfe">m</span><span style="color:#d4d4d4">.</span><span style="color:#9cdcfe">db</span><span style="color:#d4d4d4">.</span><span style="color:#dcdcaa">QueryRow</span><span style="color:#d4d4d4">(</span><span style="color:#ce9178">&quot;SELECT sub_id, is_test_sub FROM subscriptions WHERE sub_id = ?&quot;</span><span style="color:#d4d4d4">,</span> <span style="color:#9cdcfe">subID</span><span style="color:#d4d4d4">)</span><span style="color:#d4d4d4">.</span></div><div class="mm" style="top:519px">        <span style="color:#dcdcaa">Scan</span><span style="color:#d4d4d4">(</span><span style="color:#d4d4d4">&amp;</span><span style="color:#9cdcfe">s</span><span style="color:#d4d4d4">.</span><span style="color:#9cdcfe">SubID</span><span style="color:#d4d4d4">,</span> <span style="color:#d4d4d4">&amp;</span><span style="color:#9cdcfe">s</span><span style="color:#d4d4d4">.</span><span style="color:#9cdcfe">IsTestSub</span><span style="color:#d4d4d4">)</span></div><div class="mm" style="top:525px">    <span style="color:#c586c0">if</span> <span style="color:#9cdcfe">err</span> <span style="color:#d4d4d4">!</span><span style="color:#d4d4d4">=</span> <span style="color:#569cd6">nil</span> <span style="color:#d4d4d4">{</span></div><div class="mm" style="top:531px">        <span style="color:#c586c0">return</span> <span style="color:#569cd6">nil</span><span style="color:#d4d4d4">,</span> <span style="color:#9cdcfe">err</span></div><div class="mm" style="top:537px">    <span style="color:#d4d4d4">}</span></div><div class="mm" style="top:543px">    <span style="color:#c586c0">return</span> <span style="color:#9cdcfe">s</span><span style="color:#d4d4d4">,</span> <span style="color:#569cd6">nil</span></div><div class="mm" style="top:549px"><span style="color:#d4d4d4">}</span></div><div class="mm" style="top:555px"></div><div class="mm" style="top:561px"><span style="color:#569cd6">type</span> <span style="color:#4ec9b0">InviteWithDetails</span> <span style="color:#569cd6">struct</span> <span style="color:#d4d4d4">{</span></div><div class="mm" style="top:567px">    <span style="color:#9cdcfe">InviteID</span>       <span style="color:#4ec9b0">string</span></div><div class="mm" style="top:573px">    <span style="color:#9cdcfe">TenantID</span>       <span style="color:#4ec9b0">string</span></div><div class="mm" style="top:579px">    <span style="color:#9cdcfe">Code</span>           <span style="color:#4ec9b0">string</span></div><div class="mm" style="top:585px">    <span style="color:#9cdcfe">UsedByTenantID</span> <span style="color:#4ec9b0">sql</span><span style="color:#d4d4d4">.</span><span style="color:#4ec9b0">NullString</span></div><div class="mm" style="top:591px">    <span style="color:#9cdcfe">CreatedAt</span>      <span style="color:#4ec9b0">string</span></div><div class="mm" style="top:597px">    <span style="color:#9cdcfe">UsedByEmail</span>    <span style="color:#4ec9b0">sql</span><span style="color:#d4d4d4">.</span><span style="color:#4ec9b0">NullString</span></div><div class="mm" style="top:603px"><span style="color:#d4d4d4">}</span></div><div class="mm" style="top:609px"></div><div class="mm" style="top:615px"><span style="color:#569cd6">func</span> <span style="color:#d4d4d4">(</span><span style="color:#9cdcfe">m</span> <span style="color:#d4d4d4">*</span><span style="color:#4ec9b0">MainDB</span><span style="color:#d4d4d4">)</span> <span style="color:#dcdcaa">GetInvitesWithDetails</span><span style="color:#d4d4d4">(</span><span style="color:#9cdcfe">tenantID</span> <span style="color:#4ec9b0">string</span><span style="color:#d4d4d4">)</span> <span style="color:#d4d4d4">(</span><span style="color:#d4d4d4">[</span><span style="color:#d4d4d4">]</span><span style="color:#4ec9b0">InviteWithDetails</span><span style="color:#d4d4d4">,</span> <span style="color:#4ec9b0">error</span><span style="color:#d4d4d4">)</span> <span style="color:#d4d4d4">{</span></div><div class="mm" style="top:621px">    <span style="color:#9cdcfe">rows</span><span style="color:#d4d4d4">,</span> <span style="color:#9cdcfe">err</span> <span style="color:#d4d4d4">:</span><span style="color:#d4d4d4">=</span> <span style="color:#9cdcfe">m</span><span style="color:#d4d4d4">.</span><span style="color:#9cdcfe">db</span><span style="color:#d4d4d4">.</span><span style="color:#dcdcaa">Query</span><span style="color:#d4d4d4">(</span><span style="color:#ce9178">`</span></div><div class="mm" style="top:627px"><span style="color:#ce9178">        SELECT i.invite_id, i.tenant_id, i.code, i.used_by_tenant_id, i.created_at, t.email</span></div><div class="mm" style="top:633px"><span style="color:#ce9178">        FROM invites i</span></div><div class="mm" style="top:639px"><span style="color:#ce9178">        LEFT JOIN tenants t ON i.used_by_tenant_id = t.tenant_id</span></div><div class="mm" style="top:645px"><span style="color:#ce9178">        WHERE i.tenant_id = ?</span></div><div class="mm" style="top:651px"><span style="color:#ce9178">        ORDER BY i.created_at DESC</span></div><div class="mm" style="top:657px"><span style="color:#ce9178">    `</span><span style="color:#d4d4d4">,</span> <span style="color:#9cdcfe">tenantID</span><span style="color:#d4d4d4">)</span></div><div class="mm" style="top:663px">    <span style="color:#c586c0">if</span> <span style="color:#9cdcfe">err</span> <span style="color:#d4d4d4">!</span><span style="color:#d4d4d4">=</span> <span style="color:#569cd6">nil</span> <span style="color:#d4d4d4">{</span></div><div class="mm" style="top:669px">        <span style="color:#c586c0">return</span> <span style="color:#569cd6">nil</span><span style="color:#d4d4d4">,</span> <span style="color:#9cdcfe">err</span></div><div class="mm" style="top:675px">    <span style="color:#d4d4d4">}</span></div><div class="mm" style="top:681px">    <span style="color:#c586c0">defer</span> <span style="color:#9cdcfe">rows</span><span style="color:#d4d4d4">.</span><span style="color:#dcdcaa">Close</span><span style="color:#d4d4d4">(</span><span style="color:#d4d4d4">)</span></div><div class="mm" style="top:687px"></div><div class="mm" style="top:693px">    <span style="color:#569cd6">var</span> <span style="color:#9cdcfe">invites</span> <span style="color:#d4d4d4">[</span><span style="color:#d4d4d4">]</span><span style="color:#4ec9b0">InviteWithDetails</span></div><div class="mm" style="top:699px">    <span style="color:#c586c0">for</span> <span style="color:#9cdcfe">rows</span><span style="color:#d4d4d4">.</span><span style="color:#dcdcaa">Next</span><span style="color:#d4d4d4">(</span><span style="color:#d4d4d4">)</span> <span style="color:#d4d4d4">{</span></div><div class="mm" style="top:705px">        <span style="color:#569cd6">var</span> <span style="color:#9cdcfe">i</span> <span style="color:#4ec9b0">InviteWithDetails</span></div><div class="mm" style="top:711px">        <span style="color:#c586c0">if</span> <span style="color:#9cdcfe">err</span> <span style="color:#d4d4d4">:</span><span style="color:#d4d4d4">=</span> <span style="color:#9cdcfe">rows</span><span style="color:#d4d4d4">.</span><span style="color:#dcdcaa">Scan</span><span style="color:#d4d4d4">(</span><span style="color:#d4d4d4">&amp;</span><span style="color:#9cdcfe">i</span><span style="color:#d4d4d4">.</span><span style="color:#9cdcfe">InviteID</span><span style="color:#d4d4d4">,</span> <span style="color:#d4d4d4">&amp;</span><span style="color:#9cdcfe">i</span><span style="color:#d4d4d4">.</span><span style="color:#9cdcfe">TenantID</span><span style="color:#d4d4d4">,</span> <span style="color:#d4d4d4">&amp;</span><span style="color:#9cdcfe">i</span><span style="color:#d4d4d4">.</span><span style="color:#9cdcfe">Code</span><span style="color:#d4d4d4">,</span> <span style="color:#d4d4d4">&amp;</span><span style="color:#9cdcfe">i</span><span style="color:#d4d4d4">.</span><span style="color:#9cdcfe">UsedByTenantID</span><span style="color:#d4d4d4">,</span> <span style="color:#d4d4d4">&amp;</span><span style="color:#9cdcfe">i</span><span style="color:#d4d4d4">.</span><span style="color:#9cdcfe">CreatedAt</span><span style="color:#d4d4d4">,</span> <span style="color:#d4d4d4">&amp;</span><span style="color:#9cdcfe">i</span><span style="color:#d4d4d4">.</span><span style="color:#9cdcfe">UsedByEmail</span><span style="color:#d4d4d4">)</span><span style="color:#d4d4d4">;</span> <span style="color:#9cdcfe">err</span> <span style="color:#d4d4d4">!</span><span style="color:#d4d4d4">=</span> <span style="color:#569cd6">nil</span> <span style="color:#d4d4d4">{</span></div><div class="mm" style="top:717px">            <span style="color:#c586c0">return</span> <span style="color:#569cd6">nil</span><span style="color:#d4d4d4">,</span> <span style="color:#9cdcfe">err</span></div><div class="mm" style="top:723px">        <span style="color:#d4d4d4">}</span></div><div class="mm" style="top:729px">        <span style="color:#9cdcfe">invites</span> <span style="color:#d4d4d4">=</span> <span style="color:#dcdcaa">append</span><span style="color:#d4d4d4">(</span><span style="color:#9cdcfe">invites</span><span style="color:#d4d4d4">,</span> <span style="color:#9cdcfe">i</span><span style="color:#d4d4d4">)</span></div><div class="mm" style="top:735px">    <span style="color:#d4d4d4">}</span></div><div class="mm" style="top:741px">    <span style="color:#c586c0">return</span> <span style="color:#9cdcfe">invites</span><span style="color:#d4d4d4">,</span> <span style="color:#569cd6">nil</span></div><div class="mm" style="top:747px"><span style="color:#d4d4d4">}</span></div><div class="mm" style="top:753px"></div><div class="mm" style="top:759px"><span style="color:#569cd6">func</span> <span style="color:#d4d4d4">(</span><span style="color:#9cdcfe">m</span> <span style="color:#d4d4d4">*</span><span style="color:#4ec9b0">MainDB</span><span style="color:#d4d4d4">)</span> <span style="color:#dcdcaa">CreateInviteForTenant</span><span style="color:#d4d4d4">(</span><span style="color:#9cdcfe">tenantID</span> <span style="color:#4ec9b0">string</span><span style="color:#d4d4d4">)</span> <span style="color:#d4d4d4">(</span><span style="color:#4ec9b0">string</span><span style="color:#d4d4d4">,</span> <span style="color:#4ec9b0">error</span><span style="color:#d4d4d4">)</span> <span style="color:#d4d4d4">{</span></div><div class="mm" style="top:765px">    <span style="color:#c586c0">return</span> <span style="color:#9cdcfe">m</span><span style="color:#d4d4d4">.</span><span style="color:#dcdcaa">CreateInvite</span><span style="color:#d4d4d4">(</span><span style="color:#9cdcfe">tenantID</span><span style="color:#d4d4d4">)</span></div><div class="mm" style="top:771px"><span style="color:#d4d4d4">}</span></div><div class="mm" style="top:777px"></div><div class="mm" style="top:783px"><span style="color:#569cd6">func</span> <span style="color:#d4d4d4">(</span><span style="color:#9cdcfe">m</span> <span style="color:#d4d4d4">*</span><span style="color:#4ec9b0">MainDB</span><span style="color:#d4d4d4">)</span> <span style="color:#dcdcaa">DeleteInvite</span><span style="color:#d4d4d4">(</span><span style="color:#9cdcfe">inviteID</span> <span style="color:#4ec9b0">string</span><span style="color:#d4d4d4">)</span> <span style="color:#4ec9b0">error</span> <span style="color:#d4d4d4">{</span></div><div class="mm" style="top:789px">    <span style="color:#9cdcfe">_</span><span style="color:#d4d4d4">,</span> <span style="color:#9cdcfe">err</span> <span style="color:#d4d4d4">:</span><span style="color:#d4d4d4">=</span> <span style="color:#9cdcfe">m</span><span style="color:#d4d4d4">.</span><span style="color:#9cdcfe">db</span><span style="color:#d4d4d4">.</span><span style="color:#dcdcaa">Exec</span><span style="color:#d4d4d4">(</span><span style="color:#ce9178">&quot;DELETE FROM invites WHERE invite_id = ?&quot;</span><span style="color:#d4d4d4">,</span> <span style="color:#9cdcfe">inviteID</span><span style="color:#d4d4d4">)</span></div><div class="mm" style="top:795px">    <span style="color:#c586c0">return</span> <span style="color:#9cdcfe">err</span></div><div class="mm" style="top:801px"><span style="color:#d4d4d4">}</span></div><div class="mm" style="top:807px"></div><div class="mm" style="top:813px"><span style="color:#569cd6">type</span> <span style="color:#4ec9b0">TenantWithStats</span> <span style="color:#569cd6">struct</span> <span style="color:#d4d4d4">{</span></div><div class="mm" style="top:819px">    <span style="color:#9cdcfe">Tenant</span>           <span style="color:#d4d4d4">*</span><span style="color:#4ec9b0">Tenant</span></div><div class="mm" style="top:825px">    <span style="color:#9cdcfe">ContactCount</span>     <span style="color:#4ec9b0">int</span></div><div class="mm" style="top:831px">    <span style="color:#9cdcfe">InteractionCount</span> <span style="color:#4ec9b0">int</span></div><div class="mm" style="top:837px">    <span style="color:#9cdcfe">TotalInvites</span>     <span style="color:#4ec9b0">int</span></div><div class="mm" style="top:843px">    <span style="color:#9cdcfe">UsedInvites</span>      <span style="color:#4ec9b0">int</span></div><div class="mm" style="top:849px"><span style="color:#d4d4d4">}</span></div><div class="mm" style="top:855px"></div><div class="mm" style="top:861px"><span style="color:#569cd6">func</span> <span style="color:#d4d4d4">(</span><span style="color:#9cdcfe">m</span> <span style="color:#d4d4d4">*</span><span style="color:#4ec9b0">MainDB</span><span style="color:#d4d4d4">)</span> <span style="color:#dcdcaa">GetAllTenantsWithStats</span><span style="color:#d4d4d4">(</span><span style="color:#9cdcfe">tenantPool</span> <span style="color:#d4d4d4">*</span><span style="color:#4ec9b0">TenantDBPool</span><span style="color:#d4d4d4">)</span> <span style="color:#d4d4d4">(</span><span style="color:#d4d4d4">[</span><span style="color:#d4d4d4">]</span><span style="color:#4ec9b0">TenantWithStats</span><span style="color:#d4d4d4">,</span> <span style="color:#4ec9b0">error</span><span style="color:#d4d4d4">)</span> <span style="color:#d4d4d4">{</span></div><div class="mm" style="top:867px">    <span style="color:#9cdcfe">tenants</span><span style="color:#d4d4d4">,</span> <span style="color:#9cdcfe">err</span> <span style="color:#d4d4d4">:</span><span style="color:#d4d4d4">=</span> <span style="color:#9cdcfe">m</span><span style="color:#d4d4d4">.</span><span style="color:#dcdcaa">GetAllTenants</span><span style="color:#d4d4d4">(</span><span style="color:#d4d4d4">)</span></div><div class="mm" style="top:873px">    <span style="color:#c586c0">if</span> <span style="color:#9cdcfe">err</span> <span style="color:#d4d4d4">!</span><span style="color:#d4d4d4">=</span> <span style="color:#569cd6">nil</span> <span style="color:#d4d4d4">{</span></div><div class="mm" style="top:879px">        <span style="color:#c586c0">return</span> <span style="color:#569cd6">nil</span><span style="color:#d4d4d4">,</span> <span style="color:#9cdcfe">err</span></div><div class="mm" style="top:885px">    <span style="color:#d4d4d4">}</span></div><div class="mm" style="top:891px"></div><div class="mm" style="top:897px">    <span style="color:#569cd6">var</span> <span style="color:#9cdcfe">result</span> <span style="color:#d4d4d4">[</span><span style="color:#d4d4d4">]</span><span style="color:#4ec9b0">TenantWithStats</span></div><div class="mm" style="top:903px">    <span style="color:#c586c0">for</span> <span style="color:#9cdcfe">_</span><span style="color:#d4d4d4">,</span> <span style="color:#9cdcfe">t</span> <span style="color:#d4d4d4">:</span><span style="color:#d4d4d4">=</span> <span style="color:#c586c0">range</span> <span style="color:#9cdcfe">tenants</span> <span style="color:#d4d4d4">{</span></div><div class="mm" style="top:909px">        <span style="color:#9cdcfe">stats</span> <span style="color:#d4d4d4">:</span><span style="color:#d4d4d4">=</span> <span style="color:#4ec9b0">TenantWithStats</span><span style="color:#d4d4d4">{</span><span style="color:#9cdcfe">Tenant</span><span style="color:#d4d4d4">:</span> <span style="color:#9cdcfe">t</span><span style="color:#d4d4d4">}</span></div><div class="mm" style="top:915px"></div><div class="mm" style="top:921px">        <span style="color:#6a9955">// Get contact and interaction counts from tenant DB</span></div><div class="mm" style="top:927px">        <span style="color:#9cdcfe">db</span><span style="color:#d4d4d4">,</span> <span style="color:#9cdcfe">err</span> <span style="color:#d4d4d4">:</span><span style="color:#d4d4d4">=</span> <span style="color:#9cdcfe">tenantPool</span><span style="color:#d4d4d4">.</span><span style="color:#dcdcaa">Get</span><span style="color:#d4d4d4">(</span><span style="color:#9cdcfe">t</span><span style="color:#d4d4d4">.</span><span style="color:#9cdcfe">TenantID</span><span style="color:#d4d4d4">)</span></div><div class="mm" style="top:933px">        <span style="color:#c586c0">if</span> <span style="color:#9cdcfe">err</span> <span style="color:#d4d4d4">=</span><span style="color:#d4d4d4">=</span> <span style="color:#569cd6">nil</span> <span style="color:#d4d4d4">{</span></div><div class="mm" style="top:939px">            <span style="color:#9cdcfe">db</span><span style="color:#d4d4d4">.</span><span style="color:#dcdcaa">QueryRow</span><span style="color:#d4d4d4">(</span><span style="color:#ce9178">&quot;SELECT COUNT(*) FROM contacts&quot;</span><span style="color:#d4d4d4">)</span><span style="color:#d4d4d4">.</span><span style="color:#dcdcaa">Scan</span><span style="color:#d4d4d4">(</span><span style="color:#d4d4d4">&amp;</span><span style="color:#9cdcfe">stats</span><span style="color:#d4d4d4">.</span><span style="color:#9cdcfe">ContactCount</span><span style="color:#d4d4d4">)</span></div><div class="mm" style="top:945px">            <span style="color:#9cdcfe">db</span><span style="color:#d4d4d4">.</span><span style="color:#dcdcaa">QueryRow</span><span style="color:#d4d4d4">(</span><span style="color:#ce9178">&quot;SELECT COUNT(*) FROM interactions&quot;</span><span style="color:#d4d4d4">)</span><span style="color:#d4d4d4">.</span><span style="color:#dcdcaa">Scan</span><span style="color:#d4d4d4">(</span><span style="color:#d4d4d4">&amp;</span><span style="color:#9cdcfe">stats</span><span style="color:#d4d4d4">.</span><span style="color:#9cdcfe">InteractionCount</span><span style="color:#d4d4d4">)</span></div><div class="mm" style="top:951px">        <span style="color:#d4d4d4">}</span></div><div class="mm" style="top:957px"></div><div class="mm" style="top:963px">        <span style="color:#6a9955">// Get invite counts from main DB</span></div><div class="mm" style="top:969px">        <span style="color:#9cdcfe">m</span><span style="color:#d4d4d4">.</span><span style="color:#9cdcfe">db</span><span style="color:#d4d4d4">.</span><span style="color:#dcdcaa">QueryRow</span><span style="color:#d4d4d4">(</span><span style="color:#ce9178">&quot;SELECT COUNT(*) FROM invites WHERE tenant_id = ?&quot;</span><span style="color:#d4d4d4">,</span> <span style="color:#9cdcfe">t</span><span style="color:#d4d4d4">.</span><span style="color:#9cdcfe">TenantID</span><span style="color:#d4d4d4">)</span><span style="color:#d4d4d4">.</span><span style="color:#dcdcaa">Scan</span><span style="color:#d4d4d4">(</span><span style="color:#d4d4d4">&amp;</span><span style="color:#9cdcfe">stats</span><span style="color:#d4d4d4">.</span><span style="color:#9cdcfe">TotalInvites</span><span style="color:#d4d4d4">)</span></div><div class="mm" style="top:975px">        <span style="color:#9cdcfe">m</span><span style="color:#d4d4d4">.</span><span style="color:#9cdcfe">db</span><span style="color:#d4d4d4">.</span><span style="color:#dcdcaa">QueryRow</span><span style="color:#d4d4d4">(</span><span style="color:#ce9178">&quot;SELECT COUNT(*) FROM invites WHERE tenant_id = ? AND used_by_tenant_id IS NOT NULL&quot;</span><span style="color:#d4d4d4">,</span> <span style="color:#9cdcfe">t</span><span style="color:#d4d4d4">.</span><span style="color:#9cdcfe">TenantID</span><span style="color:#d4d4d4">)</span><span style="color:#d4d4d4">.</span><span style="color:#dcdcaa">Scan</span><span style="color:#d4d4d4">(</span><span style="color:#d4d4d4">&amp;</span><span style="color:#9cdcfe">stats</span><span style="color:#d4d4d4">.</span><span style="color:#9cdcfe">UsedInvites</span><span style="color:#d4d4d4">)</span></div><div class="mm" style="top:981px"></div><div class="mm" style="top:987px">        <span style="color:#9cdcfe">result</span> <span style="color:#d4d4d4">=</span> <span style="color:#dcdcaa">append</span><span style="color:#d4d4d4">(</span><span style="color:#9cdcfe">result</span><span style="color:#d4d4d4">,</span> <span style="color:#9cdcfe">stats</span><span style="color:#d4d4d4">)</span></div><div class="mm" style="top:993px">    <span style="color:#d4d4d4">}</span></div><div class="mm" style="top:999px"></div><div class="mm" style="top:1005px">    <span style="color:#c586c0">return</span> <span style="color:#9cdcfe">result</span><span style="color:#d4d4d4">,</span> <span style="color:#569cd6">nil</span></div><div class="mm" style="top:1011px"><span style="color:#d4d4d4">}</span></div></div><div class="abs" style="left:1906px;top:92px;width:13px;height:926px;background:#1f1f1f;box-shadow:inset 1px 0 0 #121212, inset 0 1px 0 #121212"></div><div class="abs" style="left:1906px;top:688px;width:13px;height:137px;background:#444444"></div><div class="abs" style="left:1906px;top:733px;width:13px;height:2px;background:#a0a0a0"></div><div class="abs" style="left:1911px;top:732px;width:5px;height:6px;background:#969696"></div><svg class="abs" style="left:0;top:0" width="1919" height="1042" viewBox="0 0 1919 1042"><text x="43.00" y="22" font-size="12.5" fill="#cccccc" textLength="19.52" lengthAdjust="spacingAndGlyphs">File</text><text x="78.25" y="22" font-size="12.5" fill="#cccccc" textLength="21.73" lengthAdjust="spacingAndGlyphs">Edit</text><text x="116.25" y="22" font-size="12.5" fill="#cccccc" textLength="51.74" lengthAdjust="spacingAndGlyphs">Selection</text><text x="184.25" y="22" font-size="12.5" fill="#cccccc" textLength="27.74" lengthAdjust="spacingAndGlyphs">View</text><text x="227.50" y="22" font-size="12.5" fill="#cccccc" textLength="16.74" lengthAdjust="spacingAndGlyphs">Go</text><text x="260.00" y="22" font-size="12.5" fill="#cccccc" textLength="22.49" lengthAdjust="spacingAndGlyphs">Run</text><text x="298.75" y="22" font-size="12.5" fill="#cccccc" textLength="48.24" lengthAdjust="spacingAndGlyphs">Terminal</text><text x="363.00" y="22" font-size="12.5" fill="#cccccc" textLength="26.52" lengthAdjust="spacingAndGlyphs">Help</text><rect x="666.5" y="5.5" width="601" height="23" rx="6" fill="#222222" stroke="#3a3a3a"/><circle cx="880" cy="16" r="4.2" fill="none" stroke="#cccccc" stroke-width="1.2"/><line x1="883" y1="19" x2="886.5" y2="22.5" stroke="#cccccc" stroke-width="1.2"/><text x="894.00" y="22" font-size="12.5" fill="#cccccc" textLength="165.98" lengthAdjust="spacingAndGlyphs">gonzo-frm [SSH: builder-home]</text><path d="M612 17h12M612 17l5-5M612 17l5 5" stroke="#cccccc" stroke-width="1.2" fill="none"/><path d="M651 17h-12M651 17l-5-5M651 17l-5 5" stroke="#8a8a8a" stroke-width="1.2" fill="none"/><text x="80.60" y="58" font-size="13" fill="#9d9d9d" textLength="84.38" lengthAdjust="spacingAndGlyphs">middleware.go</text><g transform="translate(58.3,52.5)" fill="none" stroke="#4aaad6"><path d="M0.2 -1.1h4.2" stroke-width="1.1"/><path d="M1.8 0.1h2.4" stroke-width="0.8"/><path d="M10.3 -2a2.75 2.75 0 1 0 0.4 2.1h-2.3" stroke-width="1.7"/><circle cx="14.9" cy="0" r="2.75" stroke-width="1.7"/></g><text x="226.60" y="58" font-size="13" fill="#9d9d9d" textLength="44.18" lengthAdjust="spacingAndGlyphs">seed.go</text><g transform="translate(204.3,52.5)" fill="none" stroke="#4aaad6"><path d="M0.2 -1.1h4.2" stroke-width="1.1"/><path d="M1.8 0.1h2.4" stroke-width="0.8"/><path d="M10.3 -2a2.75 2.75 0 1 0 0.4 2.1h-2.3" stroke-width="1.7"/><circle cx="14.9" cy="0" r="2.75" stroke-width="1.7"/></g><text x="346.60" y="58" font-size="13" fill="#9d9d9d" textLength="61.40" lengthAdjust="spacingAndGlyphs">migrate.go</text><text x="414.00" y="58" font-size="11.5" fill="#8b8b8b" textLength="31.00" lengthAdjust="spacingAndGlyphs">.../frm</text><g transform="translate(324.3,52.5)" fill="none" stroke="#4aaad6"><path d="M0.2 -1.1h4.2" stroke-width="1.1"/><path d="M1.8 0.1h2.4" stroke-width="0.8"/><path d="M10.3 -2a2.75 2.75 0 1 0 0.4 2.1h-2.3" stroke-width="1.7"/><circle cx="14.9" cy="0" r="2.75" stroke-width="1.7"/></g><text x="506.60" y="58" font-size="13" fill="#9d9d9d" textLength="61.40" lengthAdjust="spacingAndGlyphs">migrate.go</text><text x="574.80" y="58" font-size="11.5" fill="#8b8b8b" textLength="67.99" lengthAdjust="spacingAndGlyphs">.../migrations</text><g transform="translate(484.3,52.5)" fill="none" stroke="#4aaad6"><path d="M0.2 -1.1h4.2" stroke-width="1.1"/><path d="M1.8 0.1h2.4" stroke-width="0.8"/><path d="M10.3 -2a2.75 2.75 0 1 0 0.4 2.1h-2.3" stroke-width="1.7"/><circle cx="14.9" cy="0" r="2.75" stroke-width="1.7"/></g><text x="703.50" y="58" font-size="13" fill="#9d9d9d" textLength="102.27" lengthAdjust="spacingAndGlyphs">000001_init.up.sql</text><text x="867.60" y="58" font-size="13" fill="#ffffff" textLength="45.37" lengthAdjust="spacingAndGlyphs">main.go</text><g transform="translate(845.3,52.5)" fill="none" stroke="#4aaad6"><path d="M0.2 -1.1h4.2" stroke-width="1.1"/><path d="M1.8 0.1h2.4" stroke-width="0.8"/><path d="M10.3 -2a2.75 2.75 0 1 0 0.4 2.1h-2.3" stroke-width="1.7"/><circle cx="14.9" cy="0" r="2.75" stroke-width="1.7"/></g><text x="987.60" y="58" font-size="13" fill="#9d9d9d" textLength="57.37" lengthAdjust="spacingAndGlyphs">embed.go</text><g transform="translate(965.3,52.5)" fill="none" stroke="#4aaad6"><path d="M0.2 -1.1h4.2" stroke-width="1.1"/><path d="M1.8 0.1h2.4" stroke-width="0.8"/><path d="M10.3 -2a2.75 2.75 0 1 0 0.4 2.1h-2.3" stroke-width="1.7"/><circle cx="14.9" cy="0" r="2.75" stroke-width="1.7"/></g><text x="1107.50" y="58" font-size="13" fill="#9d9d9d" textLength="46.63" lengthAdjust="spacingAndGlyphs" font-style="italic">main.sql</text><text x="1227.60" y="58" font-size="13" fill="#9d9d9d" textLength="47.41" lengthAdjust="spacingAndGlyphs">serve.go</text><g transform="translate(1205.3,52.5)" fill="none" stroke="#4aaad6"><path d="M0.2 -1.1h4.2" stroke-width="1.1"/><path d="M1.8 0.1h2.4" stroke-width="0.8"/><path d="M10.3 -2a2.75 2.75 0 1 0 0.4 2.1h-2.3" stroke-width="1.7"/><circle cx="14.9" cy="0" r="2.75" stroke-width="1.7"/></g><text x="1347.60" y="58" font-size="13" fill="#9d9d9d" textLength="43.02" lengthAdjust="spacingAndGlyphs">auth.go</text><g transform="translate(1325.3,52.5)" fill="none" stroke="#4aaad6"><path d="M0.2 -1.1h4.2" stroke-width="1.1"/><path d="M1.8 0.1h2.4" stroke-width="0.8"/><path d="M10.3 -2a2.75 2.75 0 1 0 0.4 2.1h-2.3" stroke-width="1.7"/><circle cx="14.9" cy="0" r="2.75" stroke-width="1.7"/></g><g fill="#f05a8a"><path d="M686 47.5q0-1.7 6-1.7t6 1.7v2.6h-12z"/><rect x="686" y="51" width="12" height="3.2"/><path d="M686 55h12v1.5q0 1.7-6 1.7t-6-1.7z"/></g><g fill="#f05a8a"><path d="M1089.5 47.5q0-1.7 6-1.7t6 1.7v2.6h-12z"/><rect x="1089.5" y="51" width="12" height="3.2"/><path d="M1089.5 55h12v1.5q0 1.7-6 1.7t-6-1.7z"/></g><path d="M935.5 48.5l9 9M944.5 48.5l-9 9" stroke="#ffffff" stroke-width="1.2"/><text x="64.00" y="86" font-size="13" fill="#a9a9a9" textLength="43.00" lengthAdjust="spacingAndGlyphs">internal</text><text x="123.00" y="86" font-size="13" fill="#a9a9a9" textLength="52.00" lengthAdjust="spacingAndGlyphs">database</text><text x="213.00" y="86" font-size="13" fill="#a9a9a9" textLength="45.97" lengthAdjust="spacingAndGlyphs">main.go</text><text x="294.50" y="86" font-size="13" fill="#a9a9a9" textLength="184.18" lengthAdjust="spacingAndGlyphs">(*MainDB).GetInvitesWithDetails</text><path d="M112.5 77l4.5 4.5l-4.5 4.5" stroke="#a9a9a9" stroke-width="1.1" fill="none"/><path d="M180.5 77l4.5 4.5l-4.5 4.5" stroke="#a9a9a9" stroke-width="1.1" fill="none"/><path d="M265.5 77l4.5 4.5l-4.5 4.5" stroke="#a9a9a9" stroke-width="1.1" fill="none"/><g transform="translate(191.5,81)" fill="none" stroke="#4aaad6"><path d="M0.2 -1.1h4.2" stroke-width="1.1"/><path d="M1.8 0.1h2.4" stroke-width="0.8"/><path d="M10.3 -2a2.75 2.75 0 1 0 0.4 2.1h-2.3" stroke-width="1.7"/><circle cx="14.9" cy="0" r="2.75" stroke-width="1.7"/></g><g transform="translate(276,73.5)" stroke="#b180d7" stroke-width="1.3" fill="none" stroke-linejoin="round"><path d="M7.5 0.8l6.3 3.5v7.2l-6.3 3.6-6.3-3.6V4.3z"/><path d="M4.8 5.3l2.7 2.4 2.7-2.4M7.5 7.7v4"/></g><text x="27.30" y="1034" font-size="12" fill="#ffffff" textLength="99.68" lengthAdjust="spacingAndGlyphs">SSH: builder-home</text><path d="M10.8 1026.2l5 5-5 5M21 1022.6l-4.6 4.6 4.6 4.6" stroke="#ffffff" stroke-width="1.3" fill="none"/><text x="162.50" y="1034" font-size="12" fill="#cccccc" textLength="35.51" lengthAdjust="spacingAndGlyphs">master</text><g stroke="#cccccc" stroke-width="1.1" fill="none"><circle cx="147" cy="1023.5" r="2"/><circle cx="147" cy="1034.5" r="2"/><circle cx="154" cy="1026.5" r="2"/><path d="M147 1025.5v7M154 1028.5c0 3-7 2-7 4"/></g><g stroke="#cccccc" stroke-width="1.1" fill="none"><circle cx="222" cy="1029" r="6.3"/><path d="M219 1026l6 6M225 1026l-6 6"/></g><text x="233.50" y="1034" font-size="12" fill="#cccccc" textLength="6.51" lengthAdjust="spacingAndGlyphs">0</text><g stroke="#cccccc" stroke-width="1.1" fill="none"><path d="M251.5 1022.5l6.5 12h-13z"/><path d="M251.5 1026.5v4.5M251.5 1032v1.2"/></g><text x="262.50" y="1034" font-size="12" fill="#cccccc" textLength="6.51" lengthAdjust="spacingAndGlyphs">0</text><g stroke="#cccccc" stroke-width="1.1" fill="none"><circle cx="1437.5" cy="1027.4" r="5.3"/><path d="M1441.3 1031.2l3.6 3.6M1434.6 1027.4h5.8M1437.5 1024.5v5.8"/></g><text x="1463.00" y="1034" font-size="12" fill="#cccccc" textLength="74.00" lengthAdjust="spacingAndGlyphs">Ln 271, Col 35</text><text x="1553.00" y="1034" font-size="12" fill="#cccccc" textLength="54.63" lengthAdjust="spacingAndGlyphs">Tab Size: 4</text><text x="1624.00" y="1034" font-size="12" fill="#cccccc" textLength="30.98" lengthAdjust="spacingAndGlyphs">UTF-8</text><text x="1671.60" y="1034" font-size="12" fill="#cccccc" textLength="11.42" lengthAdjust="spacingAndGlyphs">LF</text><g stroke="#cccccc" stroke-width="1.1" fill="none"><path d="M1705.5 1023.2h-1a1.3 1.3 0 0 0-1.3 1.3v3.2q0 1.3-1.5 1.3q1.5 0 1.5 1.3v3.2a1.3 1.3 0 0 0 1.3 1.3h1"/><path d="M1709.8 1023.2h1a1.3 1.3 0 0 1 1.3 1.3v3.2q0 1.3 1.5 1.6"/></g><circle cx="1711.4" cy="1034" r="3" fill="#cccccc"/><text x="1721.00" y="1034" font-size="12" fill="#cccccc" textLength="14.99" lengthAdjust="spacingAndGlyphs">Go</text><text x="1752.70" y="1034" font-size="12" fill="#cccccc" textLength="35.32" lengthAdjust="spacingAndGlyphs">1.24.11</text><path d="M1797 1022h5l-2.5 4.5h4l-7 10 1.8-6.5h-3.8z" stroke="#cccccc" stroke-width="1" fill="none"/><g stroke="#cccccc" stroke-width="1.2" fill="none"><circle cx="1829.5" cy="1029" r="6.5"/><path d="M1825 1033.5l9-9"/></g><text x="1841.00" y="1034" font-size="12" fill="#cccccc" textLength="37.98" lengthAdjust="spacingAndGlyphs">Prettier</text><path d="M1900 1034.5v-6.5a4 4 0 0 1 8 0v6.5l1.5 1h-11z M1902.5 1036.5a1.5 1.5 0 0 0 3 0" stroke="#cccccc" stroke-width="1.1" fill="none"/><g stroke="#868686" stroke-width="1.5" fill="none" stroke-linejoin="round"><path d="M19.5 47.8h5.4l7.4 7.2v10.2a2 2 0 0 1-2 2h-10.8a2 2 0 0 1-2-2v-15.4a2 2 0 0 1 2-2z"/><path d="M24.9 47.8v5.2a2 2 0 0 0 2 2h5.4"/><path d="M14.1 51.5v13.5a5 5 0 0 0 5 5h10.1"/></g><g stroke="#868686" stroke-width="1.5" fill="none"><circle cx="21.7" cy="104.7" r="7.7"/><path d="M27.4 110.6l6.3 6.1"/></g><g stroke="#868686" stroke-width="1.4" fill="none" stroke-linejoin="round"><path d="M14.5 146.8h8.6v17.6h-8.6z M14.5 155.4h8.6 M23.1 164.4h9v-8.6h-9"/><path d="M29.3 145.2l5.2 5.2-5.2 5.2-5.2-5.2z"/></g><circle cx="32.2" cy="163" r="8" fill="#0078d4"/><path d="M30.3 160.8l2.2-1.2v7.3" stroke="#ffffff" stroke-width="1.9" fill="none"/><path d="M24.5 192.2l-10 13.8 5 8z" fill="#868686"/><path d="M24.5 192.2l8.8 17.3-13.8 4.5" stroke="#868686" stroke-width="1.3" fill="none" stroke-linejoin="round"/><g stroke="#868686" stroke-width="1.4" fill="none" stroke-linejoin="round"><path d="M21.23 987.79L21.84 984.65L26.16 984.65L26.77 987.79L28.00 988.50L31.02 987.45L33.18 991.19L30.76 993.29L30.76 994.71L33.18 996.81L31.02 1000.55L28.00 999.50L26.77 1000.21L26.16 1003.35L21.84 1003.35L21.23 1000.21L20.00 999.50L16.98 1000.55L14.82 996.81L17.24 994.71L17.24 993.29L14.82 991.19L16.98 987.45L20.00 988.50Z"/><circle cx="24" cy="994" r="2.6"/></g><g><path d="M21.5 9.3l4.3 2v11.4l-4.3 2L14.3 18l-3.5 2.7-1-.6v-8.2l1-.6 3.5 2.7z" fill="#1f9cf0"/><path d="M21.5 13.2L16.2 17l5.3 3.8z" fill="#181818"/><path d="M10 12l2-1 9 6-9 6-2-1z" fill="#0065a9" opacity="0"/></g><g stroke="#cccccc" stroke-width="1.1" fill="none"><rect x="1682" y="10.8" width="5.3" height="13" rx="1"/><rect x="1690.3" y="10.8" width="5.4" height="4.8" rx="1"/><rect x="1690.3" y="18.9" width="5.4" height="4.9" rx="1"/><rect x="1708" y="10.8" width="14.5" height="13" rx="1.8"/><path d="M1714.8 10.8v13"/><rect x="1734" y="10.8" width="14.5" height="13" rx="1.8"/><path d="M1734 20.1h14.5"/><rect x="1760" y="10.8" width="14.5" height="13" rx="1.8"/><path d="M1767.4 10.8v13"/></g><path d="M1800 16.5h10" stroke="#cccccc" stroke-width="1"/><g stroke="#cccccc" stroke-width="1" fill="none"><rect x="1846.5" y="14.5" width="8" height="8" rx="1.5"/><path d="M1848.5 12.5h6a2 2 0 0 1 2 2v6"/></g><path d="M1892 12l10 10M1902 12l-10 10" stroke="#cccccc" stroke-width="1"/><g stroke="#cccccc" stroke-width="1.1" fill="none" stroke-linejoin="round"><path d="M1288.6 11.5H1282.2a1.6 1.6 0 0 0-1.6 1.6v5.8a1.6 1.6 0 0 0 1.6 1.6h1.8v3l3-3h5.8a1.6 1.6 0 0 0 1.6-1.6v-1.2"/><path d="M1300.3 15.4l4.3 4.2 4.3-4.2"/></g><path d="M1292.2 8.600000000000001Q1292.7 10.9 1295.0 11.4Q1292.7 11.9 1292.2 14.2Q1291.7 11.9 1289.4 11.4Q1291.7 10.9 1292.2 8.600000000000001z M1294.6 13.5Q1294.9499999999998 14.85 1296.3 15.2Q1294.9499999999998 15.549999999999999 1294.6 16.9Q1294.25 15.549999999999999 1292.8999999999999 15.2Q1294.25 14.85 1294.6 13.5z" fill="#cccccc"/><g stroke="#e8825c" stroke-width="1.3" transform="translate(-0.7,0.7)"><line x1="1846" y1="52.5" x2="1853.00" y2="52.50"/><line x1="1846" y1="52.5" x2="1852.06" y2="56.00"/><line x1="1846" y1="52.5" x2="1849.50" y2="58.56"/><line x1="1846" y1="52.5" x2="1846.00" y2="59.50"/><line x1="1846" y1="52.5" x2="1842.50" y2="58.56"/><line x1="1846" y1="52.5" x2="1839.94" y2="56.00"/><line x1="1846" y1="52.5" x2="1839.00" y2="52.50"/><line x1="1846" y1="52.5" x2="1839.94" y2="49.00"/><line x1="1846" y1="52.5" x2="1842.50" y2="46.44"/><line x1="1846" y1="52.5" x2="1846.00" y2="45.50"/><line x1="1846" y1="52.5" x2="1849.50" y2="46.44"/><line x1="1846" y1="52.5" x2="1852.06" y2="49.00"/></g><g stroke="#cccccc" stroke-width="1.1" fill="none"><rect x="1864.5" y="46.5" width="14" height="13" rx="1.8"/><path d="M1871.3 46.5v13"/></g><g fill="#cccccc"><circle cx="1892" cy="53" r="1.1"/><circle cx="1897" cy="53" r="1.1"/><circle cx="1902" cy="53" r="1.1"/></g></svg></body></html>
